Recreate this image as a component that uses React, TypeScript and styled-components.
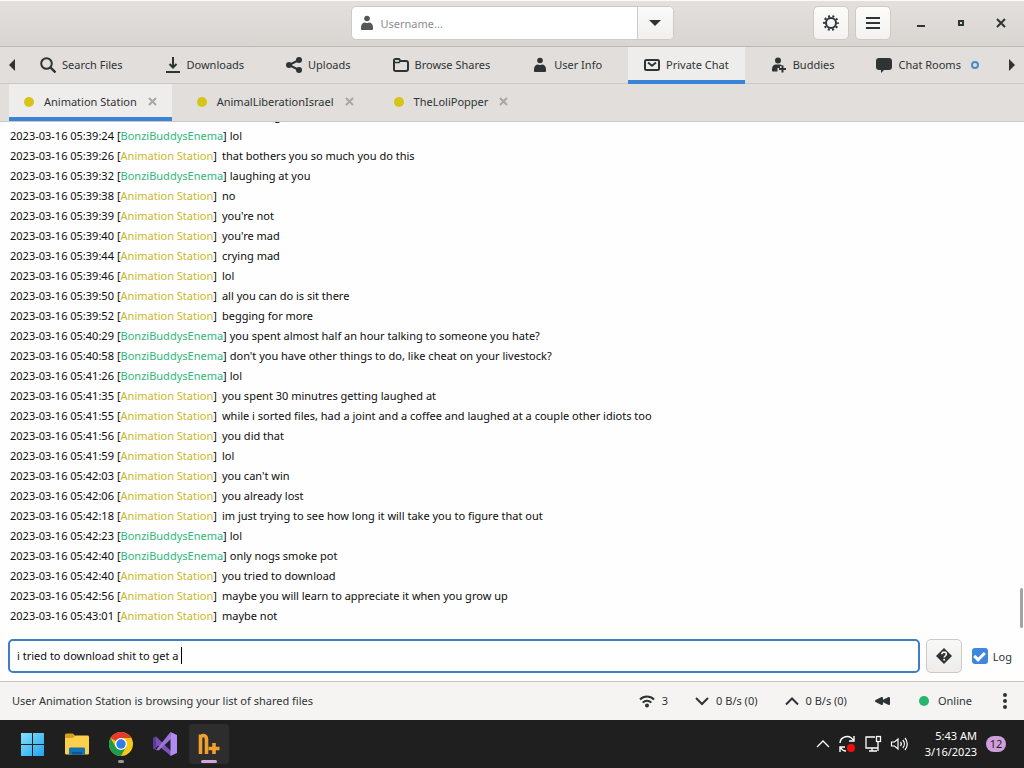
import React from "react";
import styled, { createGlobalStyle, css } from "styled-components";

const GlobalStyle = createGlobalStyle`
  *, *::after { box-sizing: border-box; }
  body {
    margin: 0;
    font-family: "Noto Sans", "Open Sans", sans-serif;
    font-size: 11px;
    color: #2e3436;
  }
  button, input { font: inherit; color: inherit; }
  button { border: 0; background: none; padding: 0; cursor: pointer; }
  svg { display: block; flex: none; }
`;

const Page = styled.div`
  display: flex;
  flex-direction: column;
  height: 100vh;
  background: #fefefe;
`;

/* Header bar */

const HeaderBar = styled.header`
  display: grid;
  grid-template-columns: 1fr minmax(200px, 323px) 1fr;
  align-items: center;
  height: 47px;
  flex: none;
  padding-bottom: 1px;
  border-top: 1px solid #fafafa;
  border-bottom: 1px solid #bdb8b4;
  background: linear-gradient(#e3e0dd, #d9d5d1);
`;

const SearchBox = styled.form`
  grid-column: 2;
  display: flex;
  height: 34px;
  border: 1px solid #cfcac6;
  border-radius: 5px;
  background: #fff;
  overflow: hidden;
`;

const SearchLabel = styled.label`
  flex: 1;
  min-width: 0;
  display: flex;
  align-items: center;
  gap: 6px;
  padding-left: 7px;
  color: #555759;
`;

const SearchInput = styled.input`
  flex: 1;
  min-width: 0;
  border: 0;
  outline: 0;
  padding: 0;
  background: transparent;
  &::placeholder { color: #8b8e8f; opacity: 1; }
`;

const DropButton = styled.button`
  width: 36px;
  display: grid;
  place-items: center;
  border-left: 1px solid #cfcac6;
  background: linear-gradient(#fafafa, #f1f0ef);
`;

const HeaderActions = styled.div`
  grid-column: 3;
  display: flex;
  justify-content: flex-end;
  align-items: center;
  gap: 6px;
  padding-right: 3px;
`;

const HeaderButton = styled.button`
  width: 36px;
  height: 34px;
  display: grid;
  place-items: center;
  border: 1px solid #cfcac6;
  border-radius: 5px;
  background: linear-gradient(#fcfcfb, #f3f2f1);
`;

const WindowControls = styled.div`
  display: flex;
  padding-left: 4px;
`;

const WindowButton = styled.button`
  width: 40px;
  height: 34px;
  display: grid;
  place-items: center;
`;

/* Main tabs */

const TabBar = styled.nav`
  display: flex;
  height: 37px;
  flex: none;
  background: #e1dedb;
  border-bottom: 1px solid #ccc8c4;
`;

const TabArrow = styled.button`
  width: 24px;
  flex: none;
  display: grid;
  place-items: center;
`;

const TabList = styled.div`
  flex: 1;
  display: flex;
  justify-content: space-between;
  padding-right: 5px;
`;

const tabLook = css<{ $active?: boolean }>`
  display: flex;
  align-items: center;
  height: 37px;
  white-space: nowrap;
  background: ${(p) => (p.$active ? "#eeedeb" : "transparent")};
  box-shadow: ${(p) => (p.$active ? "inset 0 -4px #3a84d8" : "none")};
`;

const Tab = styled.button<{ $active?: boolean }>`
  ${tabLook}
  gap: 6px;
  padding: 0 16px 2px;
`;

const NoticeRing = styled.span`
  width: 8px;
  height: 8px;
  margin-left: 4px;
  border: 2px solid #4a88cf;
  border-radius: 50%;
`;

/* Conversation tabs */

const ChatTabs = styled.div`
  display: flex;
  gap: 10px;
  height: 38px;
  flex: none;
  padding-left: 9px;
  background: #e1dedb;
  border-bottom: 1px solid #ccc8c4;
`;

const ChatTab = styled.div<{ $active?: boolean }>`
  ${tabLook}
  gap: 10px;
  padding: 0 14px 2px 15px;
`;

const StatusDot = styled.span<{ $color: string }>`
  width: 10px;
  height: 10px;
  border-radius: 50%;
  background: ${(p) => p.$color};
`;

const CloseButton = styled.button`
  width: 11px;
  height: 11px;
  color: #a9a7a5;
`;

/* Messages */

const ChatArea = styled.main`
  position: relative;
  flex: 1;
  min-height: 0;
  display: flex;
  flex-direction: column;
  justify-content: flex-end;
  overflow: hidden;
  padding: 0 10px 5px;
  color: #0c0c0c;
`;

const Message = styled.p`
  margin: 0;
  flex: none;
  display: flex;
  gap: 3px;
  height: 20px;
  line-height: 20px;
  white-space: nowrap;
`;

const Author = styled.span<{ $mine?: boolean }>`
  min-width: 102px;
  b {
    font-weight: 400;
    color: ${(p) => (p.$mine ? "#2fb878" : "#c8b92a")};
  }
`;

const ScrollThumb = styled.span`
  position: absolute;
  right: 1px;
  bottom: 3px;
  width: 3px;
  height: 40px;
  border-radius: 2px;
  background: #a3a3a3;
`;

/* Message entry */

const EntryRow = styled.form`
  display: flex;
  align-items: center;
  flex: none;
  height: 50px;
  padding: 0 12px 0 8px;
`;

const EntryBox = styled.div`
  flex: 1;
  display: flex;
  align-items: center;
  height: 34px;
  border: 2px solid #3c7fc4;
  border-radius: 5px;
  background: #fff;
  padding: 0 7px 1px;
  color: #0c0c0c;
`;

const EntryInput = styled.input`
  field-sizing: content;
  min-width: 0;
  border: 0;
  outline: 0;
  padding: 0;
  background: transparent;
`;

const Caret = styled.span`
  width: 1px;
  height: 17px;
  background: #000;
`;

const HelpButton = styled.button`
  width: 36px;
  height: 34px;
  margin: 0 10px 0 6px;
  display: grid;
  place-items: center;
  border: 1px solid #cdc9c5;
  border-radius: 5px;
  background: linear-gradient(#f8f8f7, #eeedeb);
`;

const LogLabel = styled.label`
  display: flex;
  align-items: center;
  gap: 5px;
`;

const LogCheck = styled.input`
  appearance: none;
  width: 16px;
  height: 16px;
  margin: 0;
  display: grid;
  place-items: center;
  border-radius: 3px;
  background: #3f87dc;
  &:checked::after {
    content: "";
    width: 11px;
    height: 7px;
    border: solid #fff;
    border-width: 0 0 3px 3px;
    transform: translateY(-1px) rotate(-45deg);
  }
`;

/* Status bar */

const StatusBar = styled.footer`
  display: flex;
  align-items: center;
  justify-content: space-between;
  flex: none;
  height: 39px;
  padding: 0 17px 1px 12px;
  border-top: 1px solid #c6c2be;
  background: #f5f4f2;
`;

const StatusGroup = styled.div`
  display: flex;
  align-items: center;
  gap: 27px;
`;

const StatusItem = styled.button<{ $presence?: boolean }>`
  display: flex;
  align-items: center;
  gap: ${(p) => (p.$presence ? 9 : 7)}px;
  margin: ${(p) => (p.$presence ? "0 4px 0 2px" : 0)};
  white-space: nowrap;
`;

/* Taskbar */

const Taskbar = styled.div`
  display: flex;
  align-items: center;
  justify-content: space-between;
  flex: none;
  height: 48px;
  padding: 0 18px 0 13px;
  background: #1f1f1f;
  color: #fff;
`;

const AppList = styled.div`
  display: flex;
  gap: 4px;
`;

const AppButton = styled.button<{ $open?: "idle" | "active" }>`
  position: relative;
  width: 40px;
  height: 40px;
  display: grid;
  place-items: center;
  border-radius: 4px;
  background: ${(p) => (p.$open === "active" ? "#2d2d2d" : "transparent")};
  ${(p) =>
    p.$open &&
    css`
      &::after {
        content: "";
        position: absolute;
        bottom: 1px;
        left: 50%;
        width: ${p.$open === "active" ? 16 : 6}px;
        height: 3px;
        border-radius: 2px;
        transform: translateX(-50%);
        background: ${p.$open === "active" ? "#cfa5dc" : "#9a9a9a"};
      }
    `}
`;

const Tray = styled.div`
  display: flex;
  align-items: center;
  gap: 9px;
`;

const TrayIcons = styled.div`
  display: flex;
  align-items: center;
  gap: 8px;
`;

const Clock = styled.time`
  width: 60px;
  line-height: 16px;
  text-align: right;
`;

const Badge = styled.span`
  width: 20px;
  height: 16px;
  border-radius: 8px;
  background: #cf9fdd;
  color: #1f1f1f;
  line-height: 16px;
  text-align: center;
`;

const Icon = ({ children, w = 16, h = 16 }: { children: React.ReactNode; w?: number; h?: number }) => (
  <svg width={w} height={h} viewBox={`0 0 ${w} ${h}`} fill="none" stroke="none" aria-hidden="true">
    {children}
  </svg>
);

const PersonIcon = () => (
  <Icon>
    <circle cx="8" cy="3.500" r="2.800" fill="currentColor" />
    <path d="M2 14v-2c0-2.500 2-4.500 4-4.500.6.600 3.400.600 4 0 2 0 4 2 4 4.500v2c0 .6-.4 1-1 1H3c-.6 0-1-.4-1-1z" fill="currentColor" />
  </Icon>
);

const SearchIcon = () => (
  <Icon>
    <circle cx="6.500" cy="6.500" r="5.300" stroke="currentColor" strokeWidth="2" />
    <path d="M10.500 10.500l5 5" stroke="currentColor" strokeWidth="2.400" />
  </Icon>
);

const DownloadIcon = () => (
  <Icon>
    <path d="M8 0v10M4.500 7L8 10.500 11.500 7" stroke="currentColor" strokeWidth="2" />
    <path d="M1 15h14" stroke="currentColor" strokeWidth="2" />
  </Icon>
);

const ShareIcon = () => (
  <Icon>
    <path d="M13 3L3 8l10 5" stroke="currentColor" strokeWidth="2" />
    <g fill="currentColor">
      <circle cx="13" cy="3" r="3" />
      <circle cx="3" cy="8" r="3" />
      <circle cx="13" cy="13" r="3" />
    </g>
  </Icon>
);

const FolderIcon = () => (
  <Icon>
    <path d="M1 12.500v-9C1 2.500 1.600 2 2.500 2H6l1.500 2H13c1.200 0 2 .7 2 2v6c0 1.200-.8 2-2 2H2.500C1.600 14 1 13.400 1 12.500z" stroke="currentColor" strokeWidth="2" />
    <path d="M1 5.500h5L7.500 4" stroke="currentColor" strokeWidth="1.400" />
  </Icon>
);

const MailIcon = () => (
  <Icon>
    <rect x="1" y="3" width="14" height="10" rx="1.500" stroke="currentColor" strokeWidth="2" />
    <path d="M4 5.500l4 3.200 4-3.200" stroke="currentColor" strokeWidth="2" />
  </Icon>
);

const BuddyIcon = () => (
  <Icon>
    <circle cx="7" cy="3.500" r="3" fill="currentColor" />
    <path d="M1 13.500V12c0-2.500 1.600-4.500 4-4.500h3.500c1.500 0 2.500.7 3 1.500H9v2H6.500v3.500H2c-.6 0-1-.4-1-1z" fill="currentColor" />
    <path d="M11.500 8.500v7M8 12h7" stroke="currentColor" strokeWidth="2" />
  </Icon>
);

const BubbleIcon = () => (
  <Icon>
    <path d="M3 1h10c1.800 0 3 1.200 3 3v6c0 1.800-1.200 3-3 3H8l-3 3v-3H3c-1.800 0-3-1.200-3-3V4c0-1.800 1.200-3 3-3z" fill="currentColor" />
  </Icon>
);

const GearIcon = () => (
  <Icon>
    <circle cx="8" cy="8" r="5" stroke="currentColor" strokeWidth="2" />
    <circle cx="8" cy="8" r="6.900" stroke="currentColor" strokeWidth="2" strokeDasharray="2 2.335" strokeDashoffset="1" />
  </Icon>
);

const CrossIcon = () => (
  <Icon w={11} h={11}>
    <path d="M2 2l7 7M9 2l-7 7" stroke="currentColor" strokeWidth="2" />
  </Icon>
);

const WifiIcon = () => (
  <Icon>
    <path d="M1 6.500c4-4 10-4 14 0M3.700 9.600c2.500-2.500 6.100-2.500 8.600 0" stroke="currentColor" strokeWidth="2" />
    <circle cx="8" cy="12.500" r="2" fill="currentColor" />
  </Icon>
);

const ChevronIcon = ({ up }: { up?: boolean }) => (
  <Icon w={14}>
    <path d={up ? "M1 11.500l6-6 6 6" : "M1 5l6 6 6-6"} stroke="currentColor" strokeWidth="2" />
  </Icon>
);

const tabs = [
  { label: "Search Files", icon: <SearchIcon /> },
  { label: "Downloads", icon: <DownloadIcon /> },
  { label: "Uploads", icon: <ShareIcon /> },
  { label: "Browse Shares", icon: <FolderIcon /> },
  { label: "User Info", icon: <PersonIcon /> },
  { label: "Private Chat", icon: <MailIcon />, active: true },
  { label: "Buddies", icon: <BuddyIcon /> },
  { label: "Chat Rooms", icon: <BubbleIcon />, notice: true },
];

const chats = ["Animation Station", "AnimalLiberationIsrael", "TheLoliPopper"];

const A = "Animation Station";
const B = "BonziBuddysEnema";

const messages: [string, string, string][] = [
  ["05:39:22", A, "its amazing"],
  ["05:39:24", B, "lol"],
  ["05:39:26", A, "that bothers you so much you do this"],
  ["05:39:32", B, "laughing at you"],
  ["05:39:38", A, "no"],
  ["05:39:39", A, "you're not"],
  ["05:39:40", A, "you're mad"],
  ["05:39:44", A, "crying mad"],
  ["05:39:46", A, "lol"],
  ["05:39:50", A, "all you can do is sit there"],
  ["05:39:52", A, "begging for more"],
  ["05:40:29", B, "you spent almost half an hour talking to someone you hate?"],
  ["05:40:58", B, "don't you have other things to do, like cheat on your livestock?"],
  ["05:41:26", B, "lol"],
  ["05:41:35", A, "you spent 30 minutres getting laughed at"],
  ["05:41:55", A, "while i sorted files, had a joint and a coffee and laughed at a couple other idiots too"],
  ["05:41:56", A, "you did that"],
  ["05:41:59", A, "lol"],
  ["05:42:03", A, "you can't win"],
  ["05:42:06", A, "you already lost"],
  ["05:42:18", A, "im just trying to see how long it will take you to figure that out"],
  ["05:42:23", B, "lol"],
  ["05:42:40", B, "only nogs smoke pot"],
  ["05:42:40", A, "you tried to download"],
  ["05:42:56", A, "maybe you will learn to appreciate it when you grow up"],
  ["05:43:01", A, "maybe not"],
];

export default function App() {
  return (
    <Page>
      <GlobalStyle />
      <HeaderBar>
        <SearchBox>
          <SearchLabel>
            <PersonIcon />
            <SearchInput type="text" placeholder="Username..." aria-label="Username" />
          </SearchLabel>
          <DropButton type="button" aria-label="Show users">
            <Icon w={12} h={6}><path d="M0 0h12L6 6z" fill="currentColor" /></Icon>
          </DropButton>
        </SearchBox>
        <HeaderActions>
          <HeaderButton aria-label="Preferences"><GearIcon /></HeaderButton>
          <HeaderButton aria-label="Menu">
            <Icon><path d="M1 3h14M1 8h14M1 13h14" stroke="currentColor" strokeWidth="2" /></Icon>
          </HeaderButton>
          <WindowControls>
            <WindowButton aria-label="Minimize">
              <Icon><path d="M4 11h8" stroke="currentColor" strokeWidth="2" /></Icon>
            </WindowButton>
            <WindowButton aria-label="Maximize">
              <Icon><rect x="6" y="6" width="4" height="4" stroke="currentColor" strokeWidth="2" /></Icon>
            </WindowButton>
            <WindowButton aria-label="Close">
              <Icon><path d="M4 4l8 8M12 4l-8 8" stroke="currentColor" strokeWidth="2" /></Icon>
            </WindowButton>
          </WindowControls>
        </HeaderActions>
      </HeaderBar>

      <TabBar>
        <TabArrow aria-label="Previous tab">
          <Icon w={6} h={12}><path d="M6 0v12L0 6z" fill="currentColor" /></Icon>
        </TabArrow>
        <TabList>
          {tabs.map((t) => (
            <Tab key={t.label} $active={t.active}>
              {t.icon}
              {t.label}
              {t.notice && <NoticeRing />}
            </Tab>
          ))}
        </TabList>
        <TabArrow aria-label="Next tab">
          <Icon w={6} h={12}><path d="M0 0v12l6-6z" fill="currentColor" /></Icon>
        </TabArrow>
      </TabBar>

      <ChatTabs>
        {chats.map((name, i) => (
          <ChatTab key={name} $active={i === 0}>
            <StatusDot $color="#d6c416" />
            <span>{name}</span>
            <CloseButton aria-label={`Close ${name}`}><CrossIcon /></CloseButton>
          </ChatTab>
        ))}
      </ChatTabs>

      <ChatArea>
        {messages.map(([time, author, text], i) => (
          <Message key={i}>
            <time>2023-03-16 {time}</time>
            <Author $mine={author === B}>[<b>{author}</b>]</Author>
            <span>{text}</span>
          </Message>
        ))}
        <ScrollThumb />
      </ChatArea>

      <EntryRow>
        <EntryBox>
          <EntryInput type="text" defaultValue="i tried to download shit to get a " aria-label="Message" />
          <Caret />
        </EntryBox>
        <HelpButton type="button" aria-label="Help">
          <Icon>
            <path d="M8 0l8 8-8 8-8-8z" fill="currentColor" />
            <path d="M5.800 6.300c0-3 4.600-2.800 4.600 0 0 1.500-2.200 1.500-2.200 3.200" stroke="#f3f2f1" strokeWidth="1.600" />
            <rect x="7.300" y="10.800" width="1.800" height="1.800" fill="#f3f2f1" />
          </Icon>
        </HelpButton>
        <LogLabel>
          <LogCheck type="checkbox" defaultChecked />
          Log
        </LogLabel>
      </EntryRow>

      <StatusBar>
        <span>User Animation Station is browsing your list of shared files</span>
        <StatusGroup>
          <StatusItem><WifiIcon />3</StatusItem>
          <StatusItem><ChevronIcon />0 B/s (0)</StatusItem>
          <StatusItem><ChevronIcon up />0 B/s (0)</StatusItem>
          <StatusItem aria-label="Alternative speed limits">
            <Icon><path d="M8 5v6L2 8zM15 5v6L9 8z" fill="currentColor" stroke="currentColor" strokeWidth="2" strokeLinejoin="round" /></Icon>
          </StatusItem>
          <StatusItem $presence><StatusDot $color="#26b56b" />Online</StatusItem>
          <StatusItem aria-label="More">
            <Icon w={4}>
              <g fill="currentColor"><circle cx="2" cy="2" r="2" /><circle cx="2" cy="8" r="2" /><circle cx="2" cy="14" r="2" /></g>
            </Icon>
          </StatusItem>
        </StatusGroup>
      </StatusBar>

      <Taskbar>
        <AppList>
          <AppButton aria-label="Start">
            <Icon w={24} h={24}>
              <defs>
                <linearGradient id="win" x1="0" y1="0" x2="1" y2="1">
                  <stop offset="0" stopColor="#86e0fb" /><stop offset="1" stopColor="#1fa5ee" />
                </linearGradient>
              </defs>
              <path d="M0 1h11v11H0zM12 1h11v11H12zM0 13h11v11H0zM12 13h11v11H12z" fill="url(#win)" />
            </Icon>
          </AppButton>
          <AppButton aria-label="File Explorer">
            <Icon w={24} h={24}>
              <path d="M0 3c0-1 .6-1.500 1.500-1.500H8L10.500 4v4H0z" fill="#d9a01c" />
              <path d="M0 6h8l2.500-2.500h12c1 0 1.500.6 1.500 1.500v16c0 1-.6 1.500-1.500 1.500h-21C.6 22.500 0 22 0 21z" fill="#fbd04c" />
              <path d="M4 22.500V17c0-1 .6-1.500 1.500-1.500h13c1 0 1.500.6 1.500 1.500v5.500z" fill="#1272b8" />
              <path d="M7 22.500V20h10v2.500z" fill="#0c5691" />
            </Icon>
          </AppButton>
          <AppButton aria-label="Chrome" $open="idle">
            <Icon w={24} h={24}>
              <circle cx="12" cy="12" r="12" fill="#f9c915" />
              <path d="M12 12L1.600 6A12 12 0 0 1 22.400 6H12z" fill="#e33b2e" />
              <path d="M1.600 6A12 12 0 0 0 12 24l5.200-9L12 12 6.800 15z" fill="#229a4b" />
              <circle cx="12" cy="12" r="6" fill="#fff" />
              <circle cx="12" cy="12" r="4.700" fill="#2f7de9" />
            </Icon>
          </AppButton>
          <AppButton aria-label="Visual Studio">
            <Icon w={24} h={24}>
              <path d="M0 6l3-1.500L18 19v5L5 13.500 2 17l-2-1z" fill="#7a50bd" />
              <path d="M0 6l3-1.500V18L0 16.500z" fill="#5b3a96" />
              <path d="M3 18L17.500 0 18 7 5.500 18.500z" fill="#9a73dc" />
              <path d="M17.500 0L24 3v18l-6.500 3z" fill="#b18cf0" />
            </Icon>
          </AppButton>
          <AppButton aria-label="Nicotine+" $open="active">
            <Icon w={24} h={24}>
              <path d="M3.500 22V2.500M3.500 7c0-5 6-4.500 6 .5V22" stroke="#f0a02e" strokeWidth="3.600" />
              <path d="M17 11v11M11.500 16.500h11" stroke="#f0a02e" strokeWidth="3.600" />
            </Icon>
          </AppButton>
        </AppList>
        <Tray>
          <TrayIcons>
            <Icon w={14}><path d="M1 11l6-6 6 6" stroke="currentColor" strokeWidth="1.400" /></Icon>
            <Icon w={18} h={18}>
              <path d="M2 8a7 7 0 0 1 13-3M16 1v5h-5M2 17v-5h5M3 13c1 2 3 3 5 3" stroke="currentColor" strokeWidth="1.400" />
              <circle cx="13" cy="13" r="4" fill="#f00d0d" />
            </Icon>
            <Icon w={18} h={18}>
              <path d="M11 2H2v11h12V9M5 16h8M8 13v3M14 7v9" stroke="currentColor" strokeWidth="1.300" />
              <rect x="12.500" y="1.500" width="4" height="5" stroke="currentColor" strokeWidth="1.300" />
            </Icon>
            <Icon w={18} h={18}>
              <path d="M1.500 7v4h3L8 14V4L4.500 7zM10.500 7c1 1.200 1 2.800 0 4M12.800 5c2 2.300 2 5.700 0 8M15 3c3 3.500 3 8.500 0 12" stroke="currentColor" strokeWidth="1.200" />
            </Icon>
          </TrayIcons>
          <Clock>5:43 AM<br />3/16/2023</Clock>
          <Badge>12</Badge>
        </Tray>
      </Taskbar>
    </Page>
  );
}
